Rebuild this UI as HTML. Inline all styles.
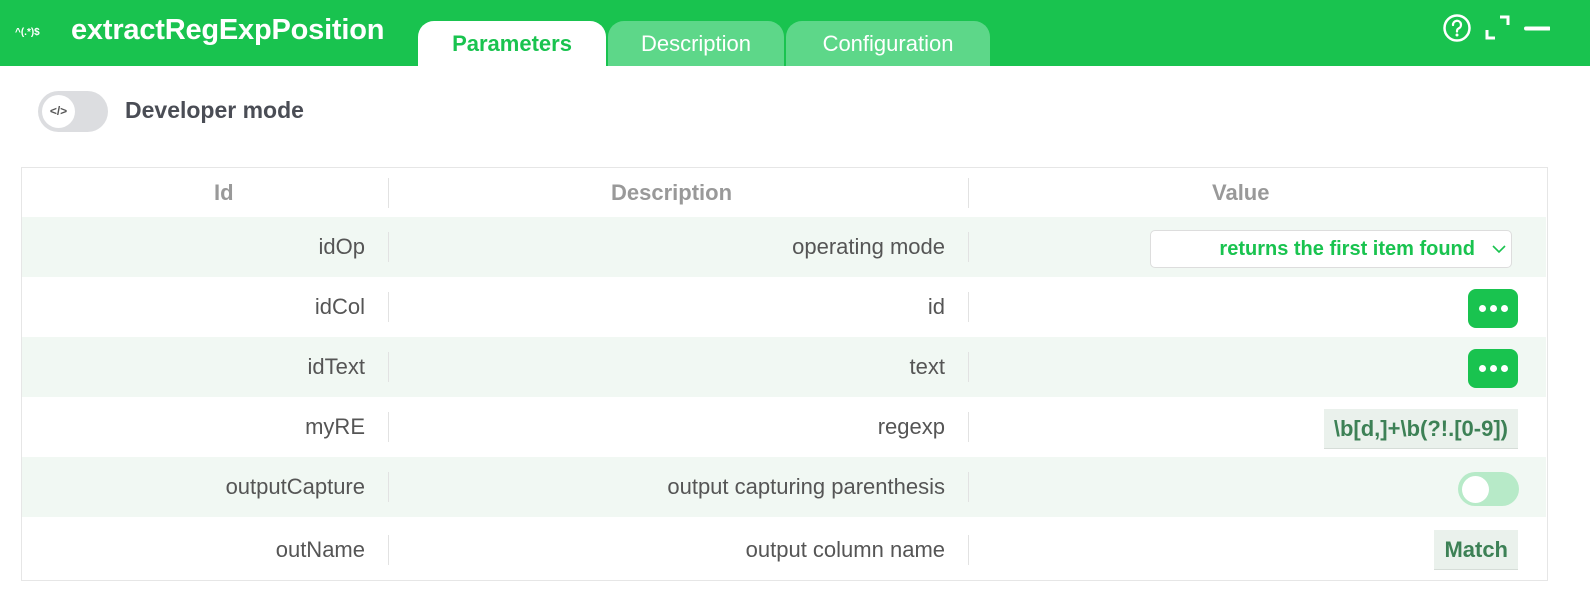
<!DOCTYPE html>
<html><head><meta charset="utf-8"><style>
*{box-sizing:border-box;margin:0;padding:0}
body{width:1590px;height:612px;background:#fff;font-family:"Liberation Sans",sans-serif;position:relative;overflow:hidden}
.hdr{position:absolute;left:0;top:0;width:1590px;height:66px;background:#19c34f}
.logo{position:absolute;left:15px;top:27px;color:#fff;font-size:10px;font-weight:bold}
.title{position:absolute;left:71px;top:14px;color:#fff;font-size:29px;font-weight:bold;letter-spacing:-0.2px}
.tab{position:absolute;top:21px;height:45px;border-radius:16px 16px 0 0;background:#5dd789;color:#fff;font-size:22px;text-align:center;line-height:46px}
.tab.act{background:#fff;color:#19c34f;font-weight:bold}
.abs{position:absolute}
.row{position:absolute;left:22px;width:1524px;height:60px;font-size:22px;color:#555}
.row.alt{background:#f1f8f3}
.c1{position:absolute;right:1181px;top:17px}
.c2{position:absolute;right:601px;top:17px}
.div{position:absolute;width:1px;background:#e2e2e2;height:30px;top:15px}
.dots{position:absolute;right:28px;top:12px;width:50px;height:39px;background:#19c34f;border-radius:8px}
.dots i{position:absolute;top:16px;width:7px;height:7px;border-radius:50%;background:#fff}
.code{position:absolute;right:28px;background:#eaf1ec;color:#3d8156;font-weight:bold;font-size:22px;border-bottom:1px solid #d6ddd8;height:40px;line-height:40px;padding:0 10px}
</style></head><body>
<div class="hdr">
<div class="logo">^(.*)$</div>
<div class="title">extractRegExpPosition</div>
<div class="tab act" style="left:418px;width:188px">Parameters</div>
<div class="tab" style="left:608px;width:176px">Description</div>
<div class="tab" style="left:786px;width:204px">Configuration</div>
<svg class="abs" style="left:1440px;top:12px" width="110" height="32" viewBox="0 0 110 32">
<circle cx="17" cy="16" r="12.5" fill="none" stroke="#fff" stroke-width="2.5"/>
<path d="M13 13a4 4 0 1 1 5.5 3.5c-1.3.6-1.5 1.3-1.5 3" fill="none" stroke="#fff" stroke-width="2.3" stroke-linecap="round"/>
<circle cx="17" cy="23" r="1.5" fill="#fff"/>
<path d="M47 18v8h8M60 5h8v8" fill="none" stroke="#fff" stroke-width="3"/>
<path d="M86 16.5h23" stroke="#fff" stroke-width="4" stroke-linecap="round"/>
</svg>
</div>
<div class="abs" style="left:38px;top:91px;width:70px;height:41px;border-radius:21px;background:#dcdde0"></div>
<div class="abs" style="left:42px;top:95px;width:33px;height:33px;border-radius:50%;background:#fff;font-size:12px;color:#555;text-align:center;line-height:33px;font-weight:bold">&lt;/&gt;</div>
<div class="abs" style="left:125px;top:97px;font-size:23px;font-weight:bold;color:#4a4d55">Developer mode</div>

<div class="abs" style="left:21px;top:167px;width:1527px;height:414px;border:1px solid #e6e6e6"></div>
<div class="row" style="top:168px;height:49px;font-weight:bold;color:#999">
<div class="abs" style="left:192px;top:12px">Id</div>
<div class="abs" style="left:589px;top:12px">Description</div>
<div class="abs" style="left:1190px;top:12px">Value</div>
<div class="div" style="left:366px;top:10px"></div><div class="div" style="left:946px;top:10px"></div>
</div>

<div class="row alt" style="top:217px"><div class="c1">idOp</div><div class="c2">operating mode</div><div class="div" style="left:366px"></div><div class="div" style="left:946px"></div>
<div class="abs" style="left:1128px;top:13px;width:362px;height:38px;background:#fff;border:1px solid #ddd;border-radius:5px;color:#19c34f;font-weight:bold;font-size:20px;line-height:36px;text-align:right;padding-right:36px">returns the first item found</div>
<svg class="abs" style="left:1470px;top:28px" width="14" height="9"><path d="M1 1l6 6 6-6" fill="none" stroke="#19c34f" stroke-width="1.6"/></svg>
</div>
<div class="row" style="top:277px"><div class="c1">idCol</div><div class="c2">id</div><div class="div" style="left:366px"></div><div class="div" style="left:946px"></div>
<div class="dots"><i style="left:11px"></i><i style="left:22px"></i><i style="left:33px"></i></div></div>
<div class="row alt" style="top:337px"><div class="c1">idText</div><div class="c2">text</div><div class="div" style="left:366px"></div><div class="div" style="left:946px"></div>
<div class="dots"><i style="left:11px"></i><i style="left:22px"></i><i style="left:33px"></i></div></div>
<div class="row" style="top:397px"><div class="c1">myRE</div><div class="c2">regexp</div><div class="div" style="left:366px"></div><div class="div" style="left:946px"></div>
<div class="code" style="top:12px">\b[d,]+\b(?!.[0-9])</div></div>
<div class="row alt" style="top:457px"><div class="c1">outputCapture</div><div class="c2">output capturing parenthesis</div><div class="div" style="left:366px"></div><div class="div" style="left:946px"></div>
<div class="abs" style="left:1436px;top:15px;width:61px;height:34px;border-radius:17px;background:#b7eac8"></div>
<div class="abs" style="left:1440px;top:19px;width:27px;height:27px;border-radius:50%;background:#fff"></div></div>
<div class="row" style="top:520px"><div class="c1">outName</div><div class="c2">output column name</div><div class="div" style="left:366px"></div><div class="div" style="left:946px"></div>
<div class="code" style="top:10px">Match</div></div>
</body></html>
